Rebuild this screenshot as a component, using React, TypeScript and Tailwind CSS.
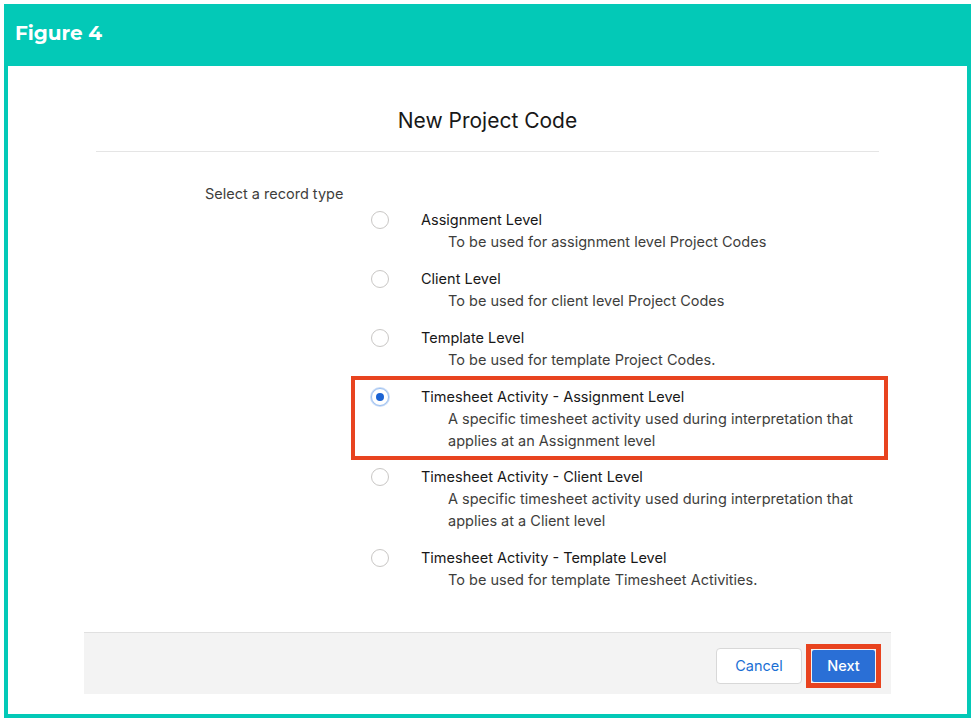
const options = [
  { label: 'Assignment Level', desc: ['To be used for assignment level Project Codes'] },
  { label: 'Client Level', desc: ['To be used for client level Project Codes'] },
  { label: 'Template Level', desc: ['To be used for template Project Codes.'] },
  {
    label: 'Timesheet Activity - Assignment Level',
    desc: ['A specific timesheet activity used during interpretation that', 'applies at an Assignment level'],
    selected: true,
  },
  {
    label: 'Timesheet Activity - Client Level',
    desc: ['A specific timesheet activity used during interpretation that', 'applies at a Client level'],
  },
  { label: 'Timesheet Activity - Template Level', desc: ['To be used for template Timesheet Activities.'] },
];

function Radio({ checked }: { checked?: boolean }) {
  return (
    <span
      className={
        'flex h-[18px] w-[18px] items-center justify-center rounded-full border bg-white ' +
        (checked ? 'border-[#9bbff0] shadow-[0_0_0_1px_#c9dcf7]' : 'border-[#c9c7c5]')
      }
    >
      {checked && <span className="h-[8px] w-[8px] rounded-full bg-[#1b63d4]" />}
    </span>
  );
}

export default function App() {
  return (
    <div className="h-[722px] w-[976px] bg-white p-[4px] font-['Inter','Liberation_Sans',Arial,sans-serif]">
      <div className="flex h-[714px] w-[967px] flex-col bg-[#03c9b7] px-[4px] pb-[4px]">
        <div className="flex h-[62px] shrink-0 items-center pl-[7px] pb-[4px] font-['Montserrat','Open_Sans',sans-serif] text-[20px] font-bold text-white">
          Figure 4
        </div>
        <div className="flex flex-1 flex-col bg-white">
          <h1 className="pt-[41px] text-center text-[21px] leading-[28px] text-[#181818]">New Project Code</h1>
          <div className="mx-[88px] mt-[16px] border-t border-[#e5e5e5]" />
          <div className="pl-[197px] pt-[32px] text-[14.5px] leading-[20px] text-[#3e3e3c]">Select a record type</div>
          <div className="mt-[1px] flex flex-col">
            {options.map((o) => (
              <div
                key={o.label}
                className={
                  'ml-[343px] mr-[79px] flex border-[4px] pl-[16px] ' +
                  (o.selected
                    ? 'relative -mt-[6px] mb-[2px] border-[#e8431f] pt-[6px] pb-[4px]'
                    : 'mb-[7px] border-transparent')
                }
              >
                <div className="pt-[2px]">
                  <Radio checked={o.selected} />
                </div>
                <div className="pl-[32px] text-[14.5px] leading-[22px] text-[#181818]">
                  <div>{o.label}</div>
                  <div className="pl-[27px] text-[#3e3e3c]">
                    {o.desc.map((d) => (
                      <div key={d}>{d}</div>
                    ))}
                  </div>
                </div>
              </div>
            ))}
          </div>
          <div className="flex-1" />
          <div className="mx-[76px] mb-[20px] flex h-[62px] shrink-0 items-center justify-end border-t border-[#e0e0e0] bg-[#f3f3f3] pt-[4px] pr-[10px]">
            <button className="h-[36px] w-[86px] rounded-[4px] border border-[#d8d8d8] bg-white text-[14.5px] text-[#1b6fd4]">
              Cancel
            </button>
            <div className="ml-[4px] border-[5px] border-[#e8431f] p-px">
              <button className="h-[32px] w-[63px] rounded-[2px] bg-[#2a6fd6] text-[14.5px] font-medium text-white">
                Next
              </button>
            </div>
          </div>
        </div>
      </div>
    </div>
  );
}
